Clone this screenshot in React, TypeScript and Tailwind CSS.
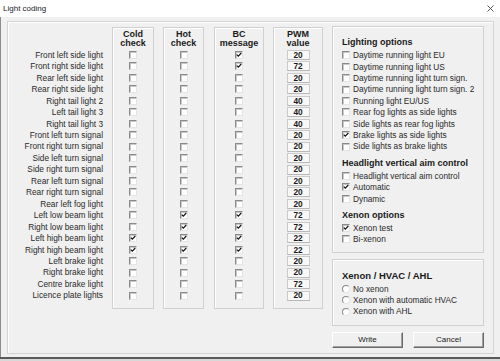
import React from "react";

type Row = [string, boolean, boolean, boolean, number];

const rows: Row[] = [
  ["Front left side light", false, false, true, 20],
  ["Front right side light", false, false, true, 72],
  ["Rear left side light", false, false, false, 20],
  ["Rear right side light", false, false, false, 20],
  ["Right tail light 2", false, false, false, 40],
  ["Left tail light 3", false, false, false, 40],
  ["Right tail light 3", false, false, false, 40],
  ["Front left turn signal", false, false, false, 20],
  ["Front right turn signal", false, false, false, 20],
  ["Side left turn signal", false, false, false, 20],
  ["Side right turn signal", false, false, false, 20],
  ["Rear left turn signal", false, false, false, 20],
  ["Rear right turn signal", false, false, false, 20],
  ["Rear left fog light", false, false, false, 20],
  ["Left low beam light", false, true, true, 72],
  ["Right low beam light", false, true, true, 72],
  ["Left high beam light", true, true, true, 22],
  ["Right high beam light", true, true, true, 22],
  ["Left brake light", false, false, false, 20],
  ["Right brake light", false, false, false, 20],
  ["Centre brake light", false, false, false, 72],
  ["Licence plate lights", false, false, false, 20],
];

function Box({ checked }: { checked?: boolean }) {
  return (
    <span className="relative inline-block w-[8px] h-[8px] shrink-0 bg-white border border-t-[#8a8a8a] border-l-[#8a8a8a] border-r-[#e4e4e4] border-b-[#e4e4e4] shadow-[inset_1px_1px_0_#c8c8c8]">
      {checked && (
        <svg className="absolute left-0 top-0" width="6" height="6" viewBox="0 0 6 6">
          <path d="M0.8 2.6 L2.3 4.2 L5.3 1" fill="none" stroke="#111" strokeWidth="1.2" />
        </svg>
      )}
    </span>
  );
}

function Radio() {
  return (
    <span className="inline-block w-[8px] h-[8px] shrink-0 rounded-full bg-white border border-t-[#8a8a8a] border-l-[#8a8a8a] border-r-[#e4e4e4] border-b-[#e4e4e4]" />
  );
}

function Column({
  title1,
  title2,
  width,
  idx,
}: {
  title1: string;
  title2: string;
  width: string;
  idx: 1 | 2 | 3;
}) {
  return (
    <div className={`${width} mt-[5px] border border-[#d0d0d0] shadow-[inset_1px_1px_0_#ffffff] pt-[2px] pb-[6.6px] shrink-0`}>
      <div className="text-center font-bold text-[9px] leading-[9px] text-[#1a1a1a]">
        <div>{title1}</div>
        <div>{title2}</div>
      </div>
      <div className="mt-[1.27px]">
        {rows.map((r, i) => (
          <div key={i} className="h-[11.46px] flex items-center justify-center">
            <Box checked={r[idx] as boolean} />
          </div>
        ))}
      </div>
    </div>
  );
}

function OptRow({ label, checked }: { label: string; checked?: boolean }) {
  return (
    <div className="h-[11.4px] flex items-center">
      <Box checked={checked} />
      <span className="ml-[3px] text-[8.3px] leading-none text-[#2a2a2a] whitespace-nowrap">{label}</span>
    </div>
  );
}

function RadioRow({ label }: { label: string }) {
  return (
    <div className="h-[11.4px] flex items-center">
      <Radio />
      <span className="ml-[3px] text-[8.3px] leading-none text-[#2a2a2a] whitespace-nowrap">{label}</span>
    </div>
  );
}

function Button({ label }: { label: string }) {
  return (
    <div className="w-[71px] h-[16px] flex items-center justify-center bg-[#f0f0f0] border border-t-white border-l-white border-r-[#6a6a6a] border-b-[#6a6a6a] shadow-[inset_-1px_-1px_0_#a0a0a0] text-[8px] text-[#222]">
      {label}
    </div>
  );
}

export default function App() {
  return (
    <div className="w-[500px] h-[361px] bg-[#f0f0f0] flex flex-col overflow-hidden font-['Liberation_Sans',Arial,sans-serif] text-[#2a2a2a]">
      <div className="h-[17px] shrink-0 bg-white flex items-center justify-between pl-[3px] pr-[6px]">
        <span className="text-[8px] leading-none text-[#222]">Light coding</span>
        <svg width="7" height="7" viewBox="0 0 7 7">
          <path d="M0.5 0.5 L6.5 6.5 M6.5 0.5 L0.5 6.5" stroke="#444" strokeWidth="0.9" />
        </svg>
      </div>
      <div className="h-[340px] shrink-0 border-l border-[#8c8c8c] pl-[6px] pt-[4px]">
        <div className="w-[487px] h-[333px] border border-[#d4d4d4] shadow-[inset_1px_1px_0_#ffffff] flex items-start">
          <div className="w-[104px] shrink-0 mt-[27.27px] pr-[9px]">
            {rows.map((r, i) => (
              <div key={i} className="h-[11.46px] flex items-center justify-end">
                <span className="text-[8.3px] leading-none whitespace-nowrap">{r[0]}</span>
              </div>
            ))}
          </div>
          <Column title1="Cold" title2="check" width="w-[42px]" idx={1} />
          <div className="ml-[9px]">
            <Column title1="Hot" title2="check" width="w-[41px]" idx={2} />
          </div>
          <div className="ml-[10px]">
            <Column title1="BC" title2="message" width="w-[50px]" idx={3} />
          </div>
          <div className="ml-[9px] w-[50px] mt-[5px] border border-[#d0d0d0] shadow-[inset_1px_1px_0_#ffffff] pt-[2px] pb-[6.6px] shrink-0">
            <div className="text-center font-bold text-[9px] leading-[9px] text-[#1a1a1a]">
              <div>PWM</div>
              <div>value</div>
            </div>
            <div className="mt-[1.27px]">
              {rows.map((r, i) => (
                <div key={i} className="h-[11.46px] flex items-center justify-center">
                  <div className="w-[23px] h-[10px] border border-[#cacaca] border-b-[#b8b8b8] bg-[#f8f8f8] flex items-center justify-center text-[8.3px] font-bold leading-none text-[#1a1a1a]">
                    {r[4]}
                  </div>
                </div>
              ))}
            </div>
          </div>
          <div className="ml-[9px] w-[152px] mt-[4px] shrink-0 flex flex-col">
            <div className="border border-[#d0d0d0] shadow-[inset_1px_1px_0_#ffffff] pl-[9px] pt-[8.7px] pb-[7px]">
              <div className="h-[14px] flex items-center text-[9px] font-bold leading-none text-[#1a1a1a]">Lighting options</div>
              <OptRow label="Daytime running light EU" />
              <OptRow label="Daytime running light US" />
              <OptRow label="Daytime running light turn sign." />
              <OptRow label="Daytime running light turn sign. 2" />
              <OptRow label="Running light EU/US" />
              <OptRow label="Rear fog lights as side lights" />
              <OptRow label="Side lights as rear fog lights" />
              <OptRow label="Brake lights as side lights" checked />
              <OptRow label="Side lights as brake lights" />
              <div className="mt-[4px] h-[14px] flex items-center text-[9px] font-bold leading-none whitespace-nowrap text-[#1a1a1a]">
                Headlight vertical aim control
              </div>
              <OptRow label="Headlight vertical aim control" />
              <OptRow label="Automatic" checked />
              <OptRow label="Dynamic" />
              <div className="mt-[4px] h-[14px] flex items-center text-[9px] font-bold leading-none text-[#1a1a1a]">Xenon options</div>
              <OptRow label="Xenon test" checked />
              <OptRow label="Bi-xenon" />
            </div>
            <div className="mt-[6px] border border-[#d0d0d0] shadow-[inset_1px_1px_0_#ffffff] pl-[9px] pt-[8px] pb-[8px]">
              <div className="h-[15px] flex items-center text-[9.5px] font-bold leading-none text-[#1a1a1a]">Xenon / HVAC / AHL</div>
              <RadioRow label="No xenon" />
              <RadioRow label="Xenon with automatic HVAC" />
              <RadioRow label="Xenon with AHL" />
            </div>
            <div className="mt-[6px] flex gap-[10px]">
              <Button label="Write" />
              <Button label="Cancel" />
            </div>
          </div>
        </div>
      </div>
      <div className="h-[2px] shrink-0 bg-[#5a5a5a]" />
      <div className="h-[2px] shrink-0 bg-[#d8d8d8]" />
    </div>
  );
}
